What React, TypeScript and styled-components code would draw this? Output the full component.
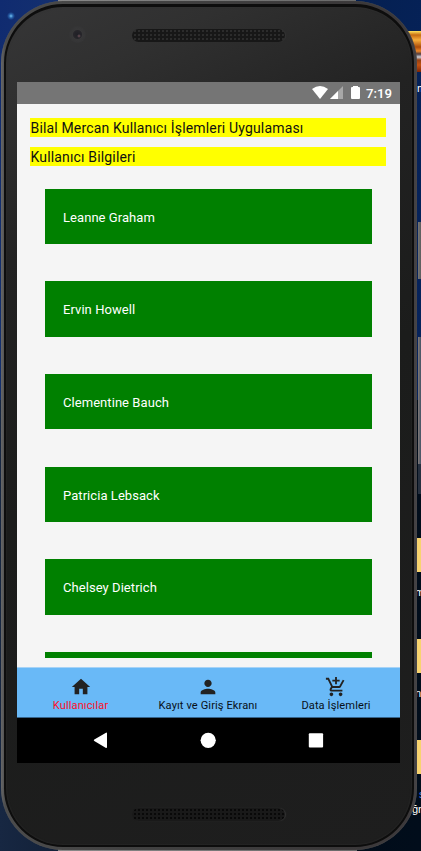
import React from "react";
import styled, { createGlobalStyle } from "styled-components";

const Global = createGlobalStyle`
  * { box-sizing: border-box; }
  body { margin: 0; overflow: hidden; font-family: Roboto, sans-serif; }
`;

const Desktop = styled.div`
  position: relative;
  width: 421px;
  height: 851px;
  overflow: hidden;
  background:
    radial-gradient(circle at 11px 16px, #74c5f5 0, #2860a8 2px, transparent 4px),
    linear-gradient(100deg, #102b70 0, #14306f 12%, #041e4c 60%, #06235c 100%) 0 0 / 100% 400px no-repeat,
    linear-gradient(90deg, #172742, #020c18 60%, #010d1b);
`;

const Behind = styled.div`
  position: absolute;
  top: 0;
  right: 0;
  width: 31px;
  height: 851px;
`;

const Patch = styled.div<{ $top: number; $h: number; $fill: string; $w?: number }>`
  position: absolute;
  right: 0;
  top: ${p => p.$top}px;
  width: ${p => p.$w ?? 31}px;
  height: ${p => p.$h}px;
  background: ${p => p.$fill};
`;

const Letter = styled.span<{ $top: number; $left: number; $color?: string }>`
  position: absolute;
  top: ${p => p.$top}px;
  left: ${p => p.$left}px;
  color: ${p => p.$color ?? "#fff"};
  font: 11px/12px "Liberation Sans", sans-serif;
`;

const Edge = styled.div<{ $bottom?: boolean }>`
  position: absolute;
  left: 58px;
  width: ${p => (p.$bottom ? 299 : 298)}px;
  height: 2px;
  ${p => (p.$bottom ? "bottom: 0;" : "top: 0;")}
  background: linear-gradient(90deg, #888, #696969);
`;

const Phone = styled.div`
  position: relative;
  width: 416px;
  height: 849px;
  margin: 1px 0 0 1px;
  padding: 3px;
  border-radius: 62px;
  background: linear-gradient(90deg, #686868 0, #4c4c4c 1%, #424242 30%, #3a3839 80%, #3c393b 98%, #454345 100%);
  box-shadow: inset 0 0 1px 0 #5c5c5c;
`;

const Body = styled.div`
  display: flex;
  flex-direction: column;
  height: 843px;
  padding: 0 13px;
  border-radius: 59px;
  border: 2px solid #0d0d0d;
  border-top-width: 3px;
  background: linear-gradient(155deg, #363637 0, #303030 10%, #222 25%, #1b1c1b 50%, #1e1e1e 100%);
  box-shadow: inset 0 0 2px #333;
`;

const Top = styled.div`
  display: flex;
  height: 75px;
  padding: 18px 0 0 50px;
`;

const Camera = styled.div`
  width: 17px;
  height: 17px;
  margin-top: 1px;
  border-radius: 50%;
  background: radial-gradient(circle at 10px 10px, #725058 0, #342f35 1.5px, transparent 2px),
    radial-gradient(circle, #201f26 0, #26252a 4px, #373738 5px, #353536 8px);
`;

const Speaker = styled.div<{ $bottom?: boolean }>`
  width: 153px;
  height: 13px;
  border-radius: 7px;
  background:
    radial-gradient(circle at 2px 2px, ${p => (p.$bottom ? "#050505" : "#303030")} 0.6px, transparent 1.2px) 1px 0 / 4px 4px,
    ${p => (p.$bottom ? "#191919" : "#171717")};
  box-shadow: 1px 0 1px #343434;
`;

const TopSpeaker = styled(Speaker)`
  margin: 4px 0 0 46px;
`;

const Screen = styled.main`
  display: flex;
  flex-direction: column;
  flex: none;
  width: 383px;
  height: 681px;
  margin-left: -2px;
  background: #f5f5f5;
`;

const StatusBar = styled.header`
  display: flex;
  align-items: center;
  height: 22px;
  padding-left: 295px;
  background: #757575;
  color: #fff;
`;

const Time = styled.span`
  margin-left: 6px;
  font-size: 13.2px;
  font-weight: 500;
  line-height: 23px;
`;

const Content = styled.section`
  height: 554.3px;
  padding: 14px 14px 0 13px;
  overflow: hidden;
`;

const Heading = styled.h1`
  height: 19px;
  margin: 0 0 9.5px;
  padding-left: 0.5px;
  background: #ff0;
  color: #111;
  font-size: 14px;
  font-weight: 400;
  letter-spacing: 0.16px;
  line-height: 20px;
  white-space: nowrap;
`;

const List = styled.div`
  display: flex;
  flex-direction: column;
  gap: 37.2px;
  margin: 23.4px 14px 0 14.5px;
`;

const Row = styled.div`
  flex: none;
  height: 55.4px;
  padding-left: 18.5px;
  background: #008000;
  color: #fff;
  font-size: 13px;
  letter-spacing: 0.06px;
  line-height: 57px;
`;

const Tabs = styled.nav`
  position: relative;
  display: grid;
  grid-template-columns: 127px 128px 128px;
  flex: none;
  height: 51px;
  margin-top: 9px;
  background: #69b9f7;
  border-top: 1px solid #a7d3f6;
  border-bottom: 1px solid #35638a;
`;

const Tab = styled.div<{ $active?: boolean }>`
  display: flex;
  flex-direction: column;
  align-items: center;
  padding-top: 8px;
  color: ${p => (p.$active ? "#ff1028" : "#081018")};
  font-size: 11.1px;
  letter-spacing: 0.1px;
  line-height: 13px;
  white-space: nowrap;
  svg { display: block; fill: #222; margin-bottom: 1px; }
`;

const AndroidNav = styled.footer`
  flex: 1;
  background: #000;
  svg { display: block; fill: #fff; }
`;

const Chin = styled.div`
  display: flex;
  padding: 45px 0 0 113px;
`;

const people = ["Leanne Graham", "Ervin Howell", "Clementine Bauch", "Patricia Lebsack", "Chelsey Dietrich", ""];
const tabs = [
  { label: "Kullanıcılar", path: "M10 20v-6h4v6h5v-8h3L12 3 2 12h3v8z" },
  { label: "Kayıt ve Giriş Ekranı", path: "M12 12c2.21 0 4-1.79 4-4s-1.79-4-4-4-4 1.79-4 4 1.79 4 4 4zm0 2c-2.67 0-8 1.34-8 4v2h16v-2c0-2.66-5.33-4-8-4z" },
  { label: "Data İşlemleri", path: "M11 9h2V6h3V4h-3V1h-2v3H8v2h3v3zm-4 9c-1.1 0-1.99.9-1.99 2S5.9 22 7 22s2-.9 2-2-.9-2-2-2zm10 0c-1.1 0-1.99.9-1.99 2s.89 2 1.99 2 2-.9 2-2-.9-2-2-2zm-9.83-3.25l.03-.12.9-1.63h7.45c.75 0 1.41-.41 1.75-1.03l3.86-7.01L19.42 4l-1.1 2-2.76 5H8.53l-.13-.27L6.16 6l-.95-2-.94-2H1v2h2l3.6 7.59-1.35 2.45c-.16.28-.25.61-.25.96 0 1.1.9 2 2 2h12v-2H7.42c-.13 0-.25-.11-.25-.25z" },
];

export default function App() {
  return (
    <>
      <Global />
      <Desktop>
        <Behind>
          <Patch $top={31} $h={41} $fill="linear-gradient(#ffe45c 0, #c66b12 4px, #f6ad3b 9px, #ab4b09 16px, #ed8729 20px, #533b3b 23px, #c9ced8 26px, #934013 29px, #c35110 34px, #7c2606)" />
          <Patch $top={222} $h={57} $w={3} $fill="linear-gradient(90deg, #777, #5c5c5c)" />
          <Patch $top={337} $h={127} $w={3} $fill="linear-gradient(90deg, #847b78, #435164)" />
          <Patch $top={464} $h={30} $w={3} $fill="#26303f" />
          {[538, 639, 740].map(top => <Patch key={top} $top={top} $h={34} $fill="#f8d36f" />)}
          <Letter $top={82} $left={27}>m</Letter>
          <Letter $top={586} $left={25}>m</Letter>
          <Letter $top={687} $left={25}>n</Letter>
          <Letter $top={788} $left={29} $color="#4388e8">s</Letter>
          <Letter $top={803} $left={22}>ğr</Letter>
        </Behind>
        <Edge />
        <Edge $bottom />
        <Phone>
          <Body>
            <Top><Camera /><TopSpeaker /></Top>
            <Screen>
              <StatusBar>
                <svg width="45" height="22" viewBox="0 0 45 22">
                  <path d="M0 7Q8 1 16 7L8 17Z" fill="#fff" />
                  <path d="M18 17L31 4V17Z" fill="#a8a8a8" />
                  <path d="M18 17L26 9V17Z" fill="#fff" />
                  <path d="M39 6q0-1 1-1h1V4h4v13h-5q-1 0-1-1z" fill="#fff" />
                </svg>
                <svg width="3" height="22" viewBox="0 0 3 22"><path d="M0 4h1v1h1q1 0 1 1v10q0 1-1 1H0z" fill="#fff" /></svg>
                <Time>7:19</Time>
              </StatusBar>
              <Content>
                <Heading>Bilal Mercan Kullanıcı İşlemleri Uygulaması</Heading>
                <Heading as="h2">Kullanıcı Bilgileri</Heading>
                <List>{people.map((name, i) => <Row key={i}>{name}</Row>)}</List>
              </Content>
              <Tabs>
                {tabs.map((tab, i) => (
                  <Tab key={tab.label} $active={i === 0}>
                    <svg width="22" height="22" viewBox="0 0 24 24"><path d={tab.path} /></svg>
                    {tab.label}
                  </Tab>
                ))}
              </Tabs>
              <AndroidNav>
                <svg width="383" height="45" viewBox="0 0 383 45">
                  <path d="M77.3 21.5Q76.2 22.3 77.3 23.1L89 30Q90 30.3 90 29V15.5Q90 14 89 14.7Z" />
                  <circle cx="191.2" cy="22.3" r="7.6" />
                  <rect x="291.8" y="15.3" width="14.3" height="14.3" rx="1" />
                </svg>
              </AndroidNav>
            </Screen>
            <Chin><Speaker $bottom /></Chin>
          </Body>
        </Phone>
      </Desktop>
    </>
  );
}
